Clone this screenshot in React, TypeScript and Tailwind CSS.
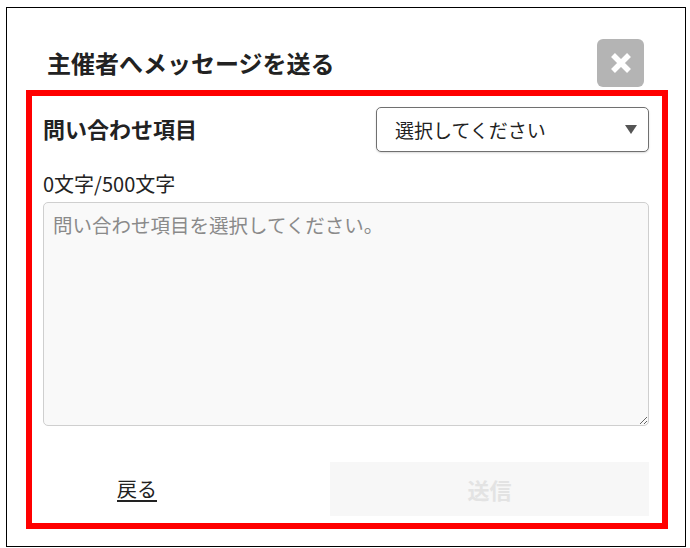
import React from "react";

export default function App() {
  const font = { fontFamily: '"Noto Sans CJK JP", "Noto Sans", sans-serif' };
  return (
    <div className="w-[690px] h-[548px] bg-white pt-[7px] pl-[6px]" style={font}>
      <div className="w-[680px] h-[540px] border border-black flex flex-col">
        <div className="flex items-center justify-between pl-[40px] pr-[41px] pt-[31px]">
          <h1 className="text-[24px] font-bold text-[#222] leading-none">主催者へメッセージを送る</h1>
          <button className="w-[47px] h-[48px] rounded-[6px] bg-[#b4b4b4] flex items-center justify-center">
            <svg width="22" height="20" viewBox="0 0 22 20">
              <path d="M3 2 L19 18 M19 2 L3 18" stroke="#fff" strokeWidth="5.5" strokeLinecap="butt" />
            </svg>
          </button>
        </div>
        <div className="ml-[19px] mt-[3px] w-[642px] h-[439px] border-[6px] border-[#f00] pl-[11px] pr-[13px] pt-[11px] flex flex-col">
          <div className="flex items-center justify-between">
            <span className="text-[22px] font-bold text-[#222] leading-none -mt-[4px]">問い合わせ項目</span>
            <div className="w-[273px] h-[45px] border border-[#707070] rounded-[5px] shadow-[0_1px_2px_rgba(0,0,0,0.15)] flex items-center justify-between pl-[18px] pr-[11px] bg-white">
              <span className="text-[19px] text-[#222] leading-none">選択してください</span>
              <svg width="12" height="9" viewBox="0 0 12 9">
                <path d="M0 0 H12 L6 9 Z" fill="#555" />
              </svg>
            </div>
          </div>
          <div className="mt-[22px] text-[20px] text-[#222] leading-none">0文字/500文字</div>
          <textarea
            readOnly
            placeholder="問い合わせ項目を選択してください。"
            className="mt-[8px] w-[606px] h-[224px] shrink-0 bg-[#f9f9f9] border border-[#cfcfcf] rounded-[5px] px-[9px] py-[8px] text-[19.5px] leading-[1.4] text-[#222] placeholder:text-[#8a8a8a] outline-none"
          />
          <div className="flex items-center mt-[36px]">
            <div className="w-[188px] flex justify-center">
              <a className="text-[20px] text-[#222] underline underline-offset-[3px] leading-none">戻る</a>
            </div>
            <div className="ml-auto w-[319px] h-[54px] bg-[#f7f7f7] flex items-center justify-center">
              <span className="text-[22px] font-bold text-[#e3e3e3] leading-none">送信</span>
            </div>
          </div>
        </div>
      </div>
    </div>
  );
}
